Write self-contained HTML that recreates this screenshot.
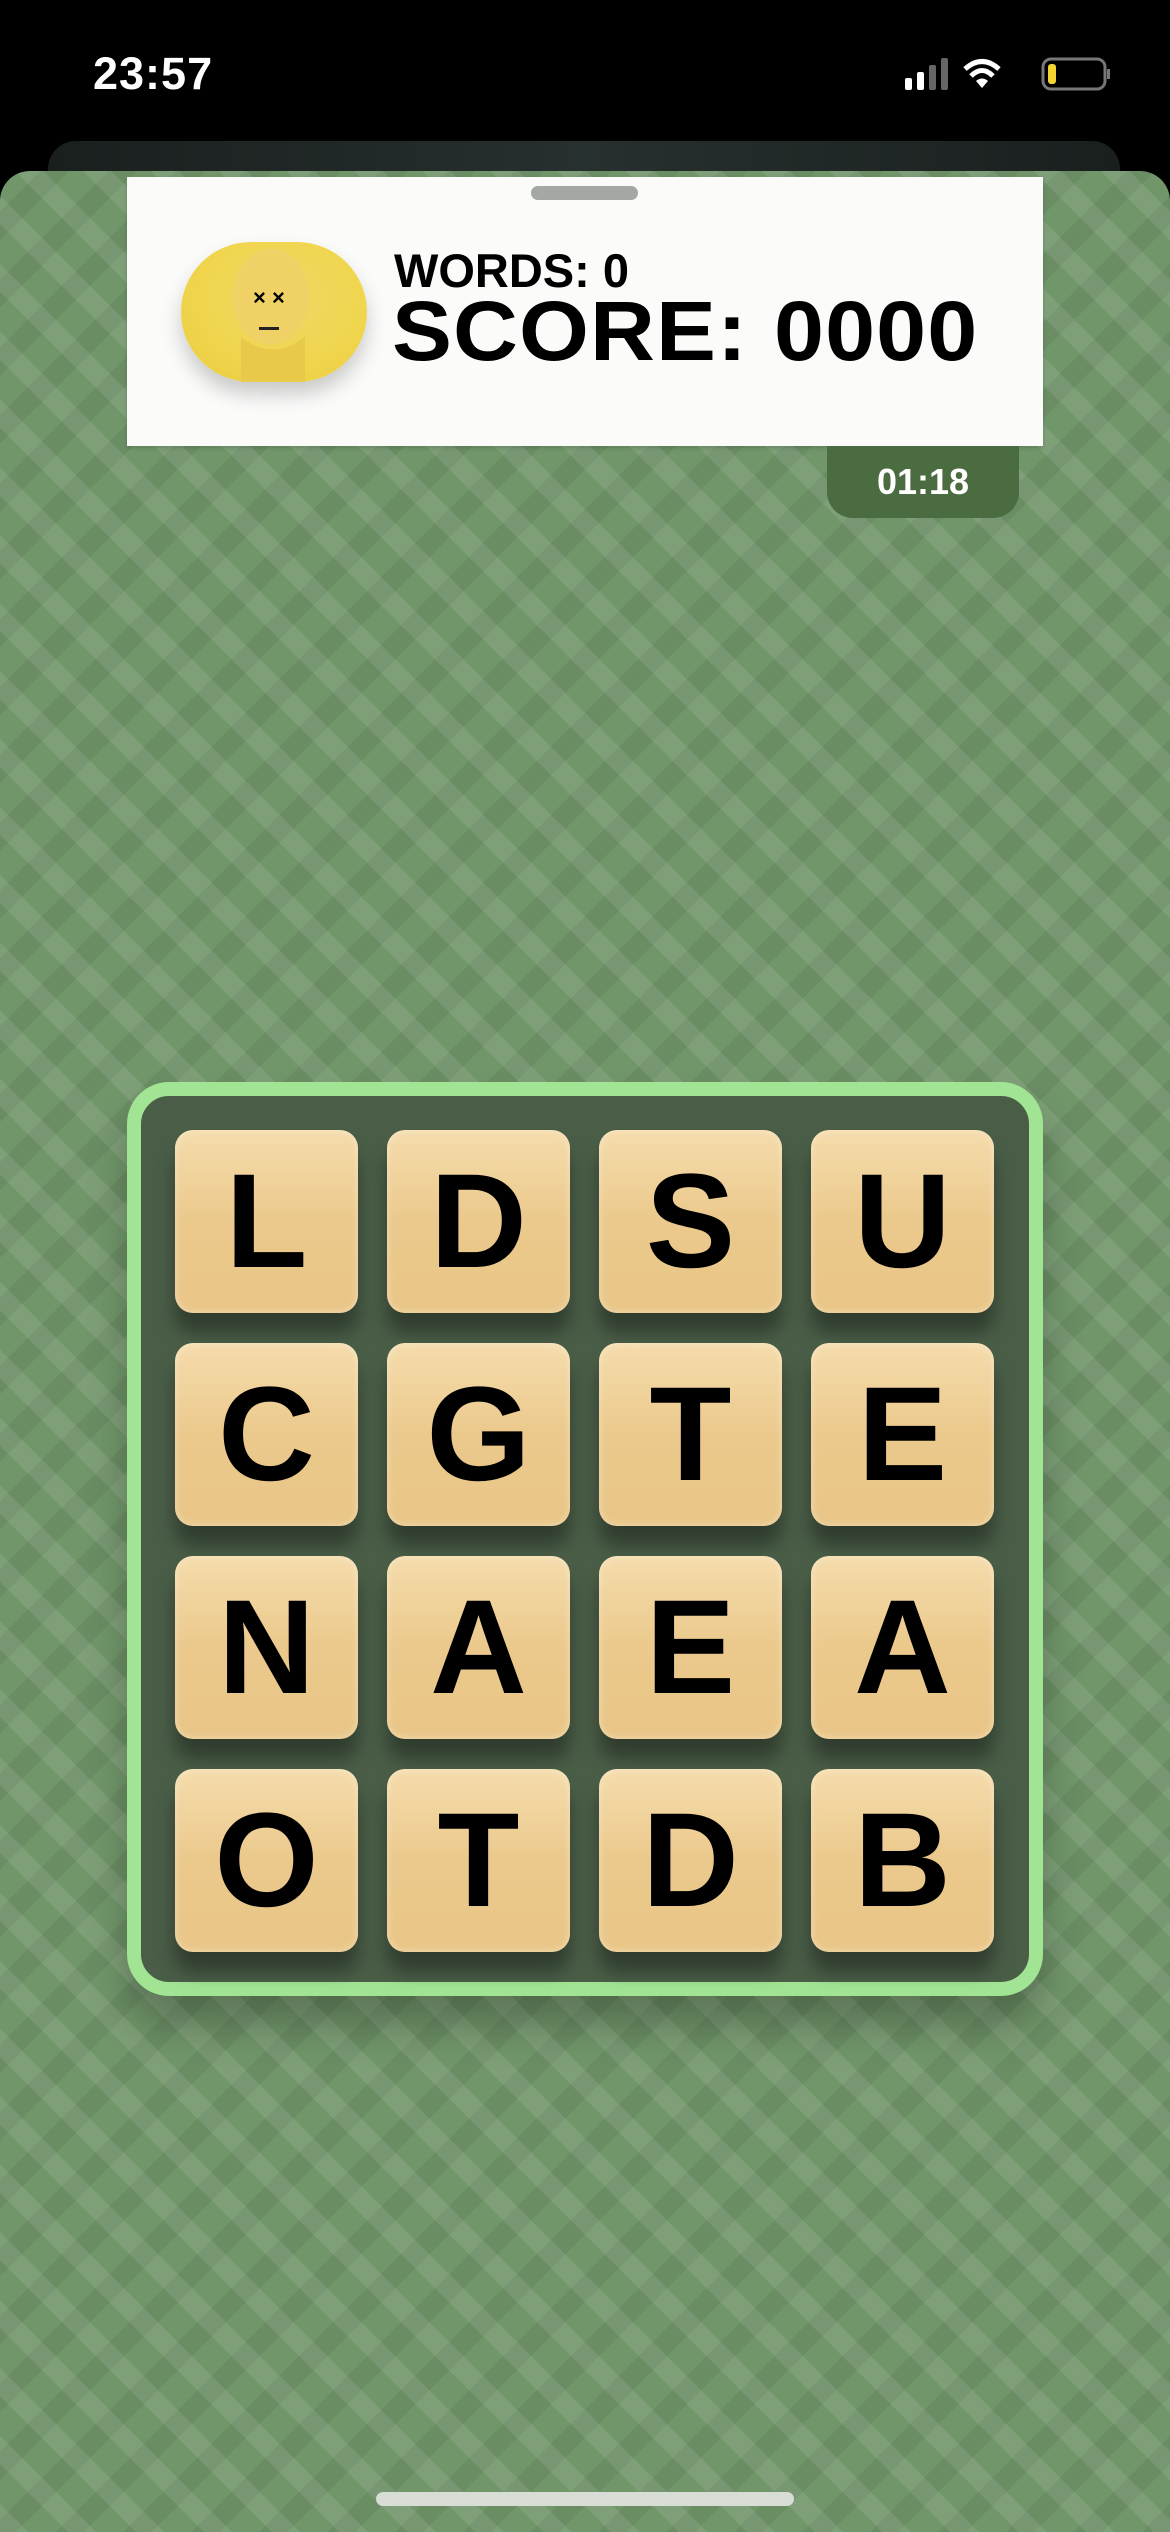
<!DOCTYPE html>
<html><head><meta charset="utf-8"><style>
*{margin:0;padding:0;box-sizing:border-box}
body{width:1170px;height:2532px;background:#000;position:relative;overflow:hidden;font-family:"Liberation Sans",sans-serif}
.time{position:absolute;left:93px;top:48px;color:#fff;font-size:45px;font-weight:600;letter-spacing:1px}
.back{position:absolute;left:48px;top:141px;width:1072px;height:80px;border-radius:28px;background:linear-gradient(90deg,#1a1f1e,#26302f 50%,#1a1f1e)}
.sheet{position:absolute;left:0;top:171px;width:1170px;height:2361px;border-radius:30px 30px 0 0;background-color:#71966a;
background-image:repeating-linear-gradient(45deg,rgba(255,255,255,.09) 0 20px,transparent 20px 48px),repeating-linear-gradient(-45deg,rgba(0,0,0,.06) 0 20px,transparent 20px 48px);overflow:hidden}
.paper{position:absolute;left:127px;top:177px;width:916px;height:269px;background:#fbfbfa;box-shadow:0 2px 4px rgba(0,0,0,.15)}
.handle{position:absolute;left:531px;top:186px;width:107px;height:14px;border-radius:7px;background:#a3a8a4}
.av{position:absolute;left:181px;top:242px;width:186px;height:140px;border-radius:70px;background:radial-gradient(ellipse at 55% 40%,#f0d765,#f0d54c 60%,#e8c93e);box-shadow:0 12px 20px rgba(0,0,0,.2)}
.words{position:absolute;left:394px;top:243px;font-size:47px;font-weight:900;color:#000}
.score{position:absolute;left:392px;top:283px;font-size:84px;font-weight:900;color:#000;letter-spacing:1px;transform:scaleX(1.07);transform-origin:left}
.timer{position:absolute;left:827px;top:446px;width:192px;height:72px;border-radius:0 0 26px 26px;background:#4b6b40;color:#fff;font-size:36px;font-weight:700;text-align:center;line-height:72px}
.board{position:absolute;left:127px;top:1082px;width:916px;height:914px;border:14px solid #a1e594;border-radius:42px;background:#4a5e47;box-shadow:0 30px 40px rgba(0,0,0,.25)}
.tile{position:absolute;width:183px;height:183px;border-radius:18px;background:linear-gradient(180deg,#f5dcac,#ebc98c 50%,#e9c687);box-shadow:0 20px 18px rgba(0,0,0,.35),inset 0 0 8px rgba(255,255,255,.4);text-align:center;line-height:183px;font-size:134px;font-weight:700;color:#000}
.home{position:absolute;left:376px;top:2492px;width:418px;height:14px;border-radius:7px;background:#d8ddd6}
</style></head><body>
<div class="time">23:57</div>
<svg style="position:absolute;left:905px;top:56px" width="210" height="38">
<rect x="0" y="22" width="7" height="12" rx="2" fill="#fff"/><rect x="12" y="16" width="7" height="18" rx="2" fill="#fff"/><rect x="24" y="9" width="7" height="25" rx="2" fill="#666"/><rect x="36" y="2" width="7" height="32" rx="2" fill="#666"/>
<path d="M60 13 Q77 -2 94 13" stroke="#fff" stroke-width="5" fill="none"/><path d="M66 20 Q77 9 88 20" stroke="#fff" stroke-width="5" fill="none"/><path d="M77 32 L71 25 Q77 20 83 25Z" fill="#fff"/>
<rect x="138" y="3" width="62" height="30" rx="8" stroke="#777" stroke-width="3" fill="none"/><rect x="143" y="8" width="8" height="20" rx="3" fill="#f3d431"/><rect x="202" y="13" width="3" height="10" fill="#777"/>
</svg>
<div class="back"></div>
<div class="sheet"></div>
<div class="paper"></div>
<div class="handle"></div>
<div class="av"><svg width="186" height="140"><ellipse cx="90" cy="55" rx="38" ry="48" fill="#efd166"/><path d="M60 140 L60 95 Q92 120 124 95 L124 140Z" fill="#e8c94a"/><text x="72" y="63" font-size="22" font-family="Liberation Sans" font-weight="700">× ×</text><rect x="78" y="85" width="20" height="3" fill="#222"/></svg></div>
<div class="words">WORDS: 0</div>
<div class="score">SCORE: 0000</div>
<div class="timer">01:18</div>
<div class="board"></div>
<div class="tile" style="left:175px;top:1130px">L</div>
<div class="tile" style="left:387px;top:1130px">D</div>
<div class="tile" style="left:599px;top:1130px">S</div>
<div class="tile" style="left:811px;top:1130px">U</div>
<div class="tile" style="left:175px;top:1343px">C</div>
<div class="tile" style="left:387px;top:1343px">G</div>
<div class="tile" style="left:599px;top:1343px">T</div>
<div class="tile" style="left:811px;top:1343px">E</div>
<div class="tile" style="left:175px;top:1556px">N</div>
<div class="tile" style="left:387px;top:1556px">A</div>
<div class="tile" style="left:599px;top:1556px">E</div>
<div class="tile" style="left:811px;top:1556px">A</div>
<div class="tile" style="left:175px;top:1769px">O</div>
<div class="tile" style="left:387px;top:1769px">T</div>
<div class="tile" style="left:599px;top:1769px">D</div>
<div class="tile" style="left:811px;top:1769px">B</div>
<div class="home"></div>
</body></html>
